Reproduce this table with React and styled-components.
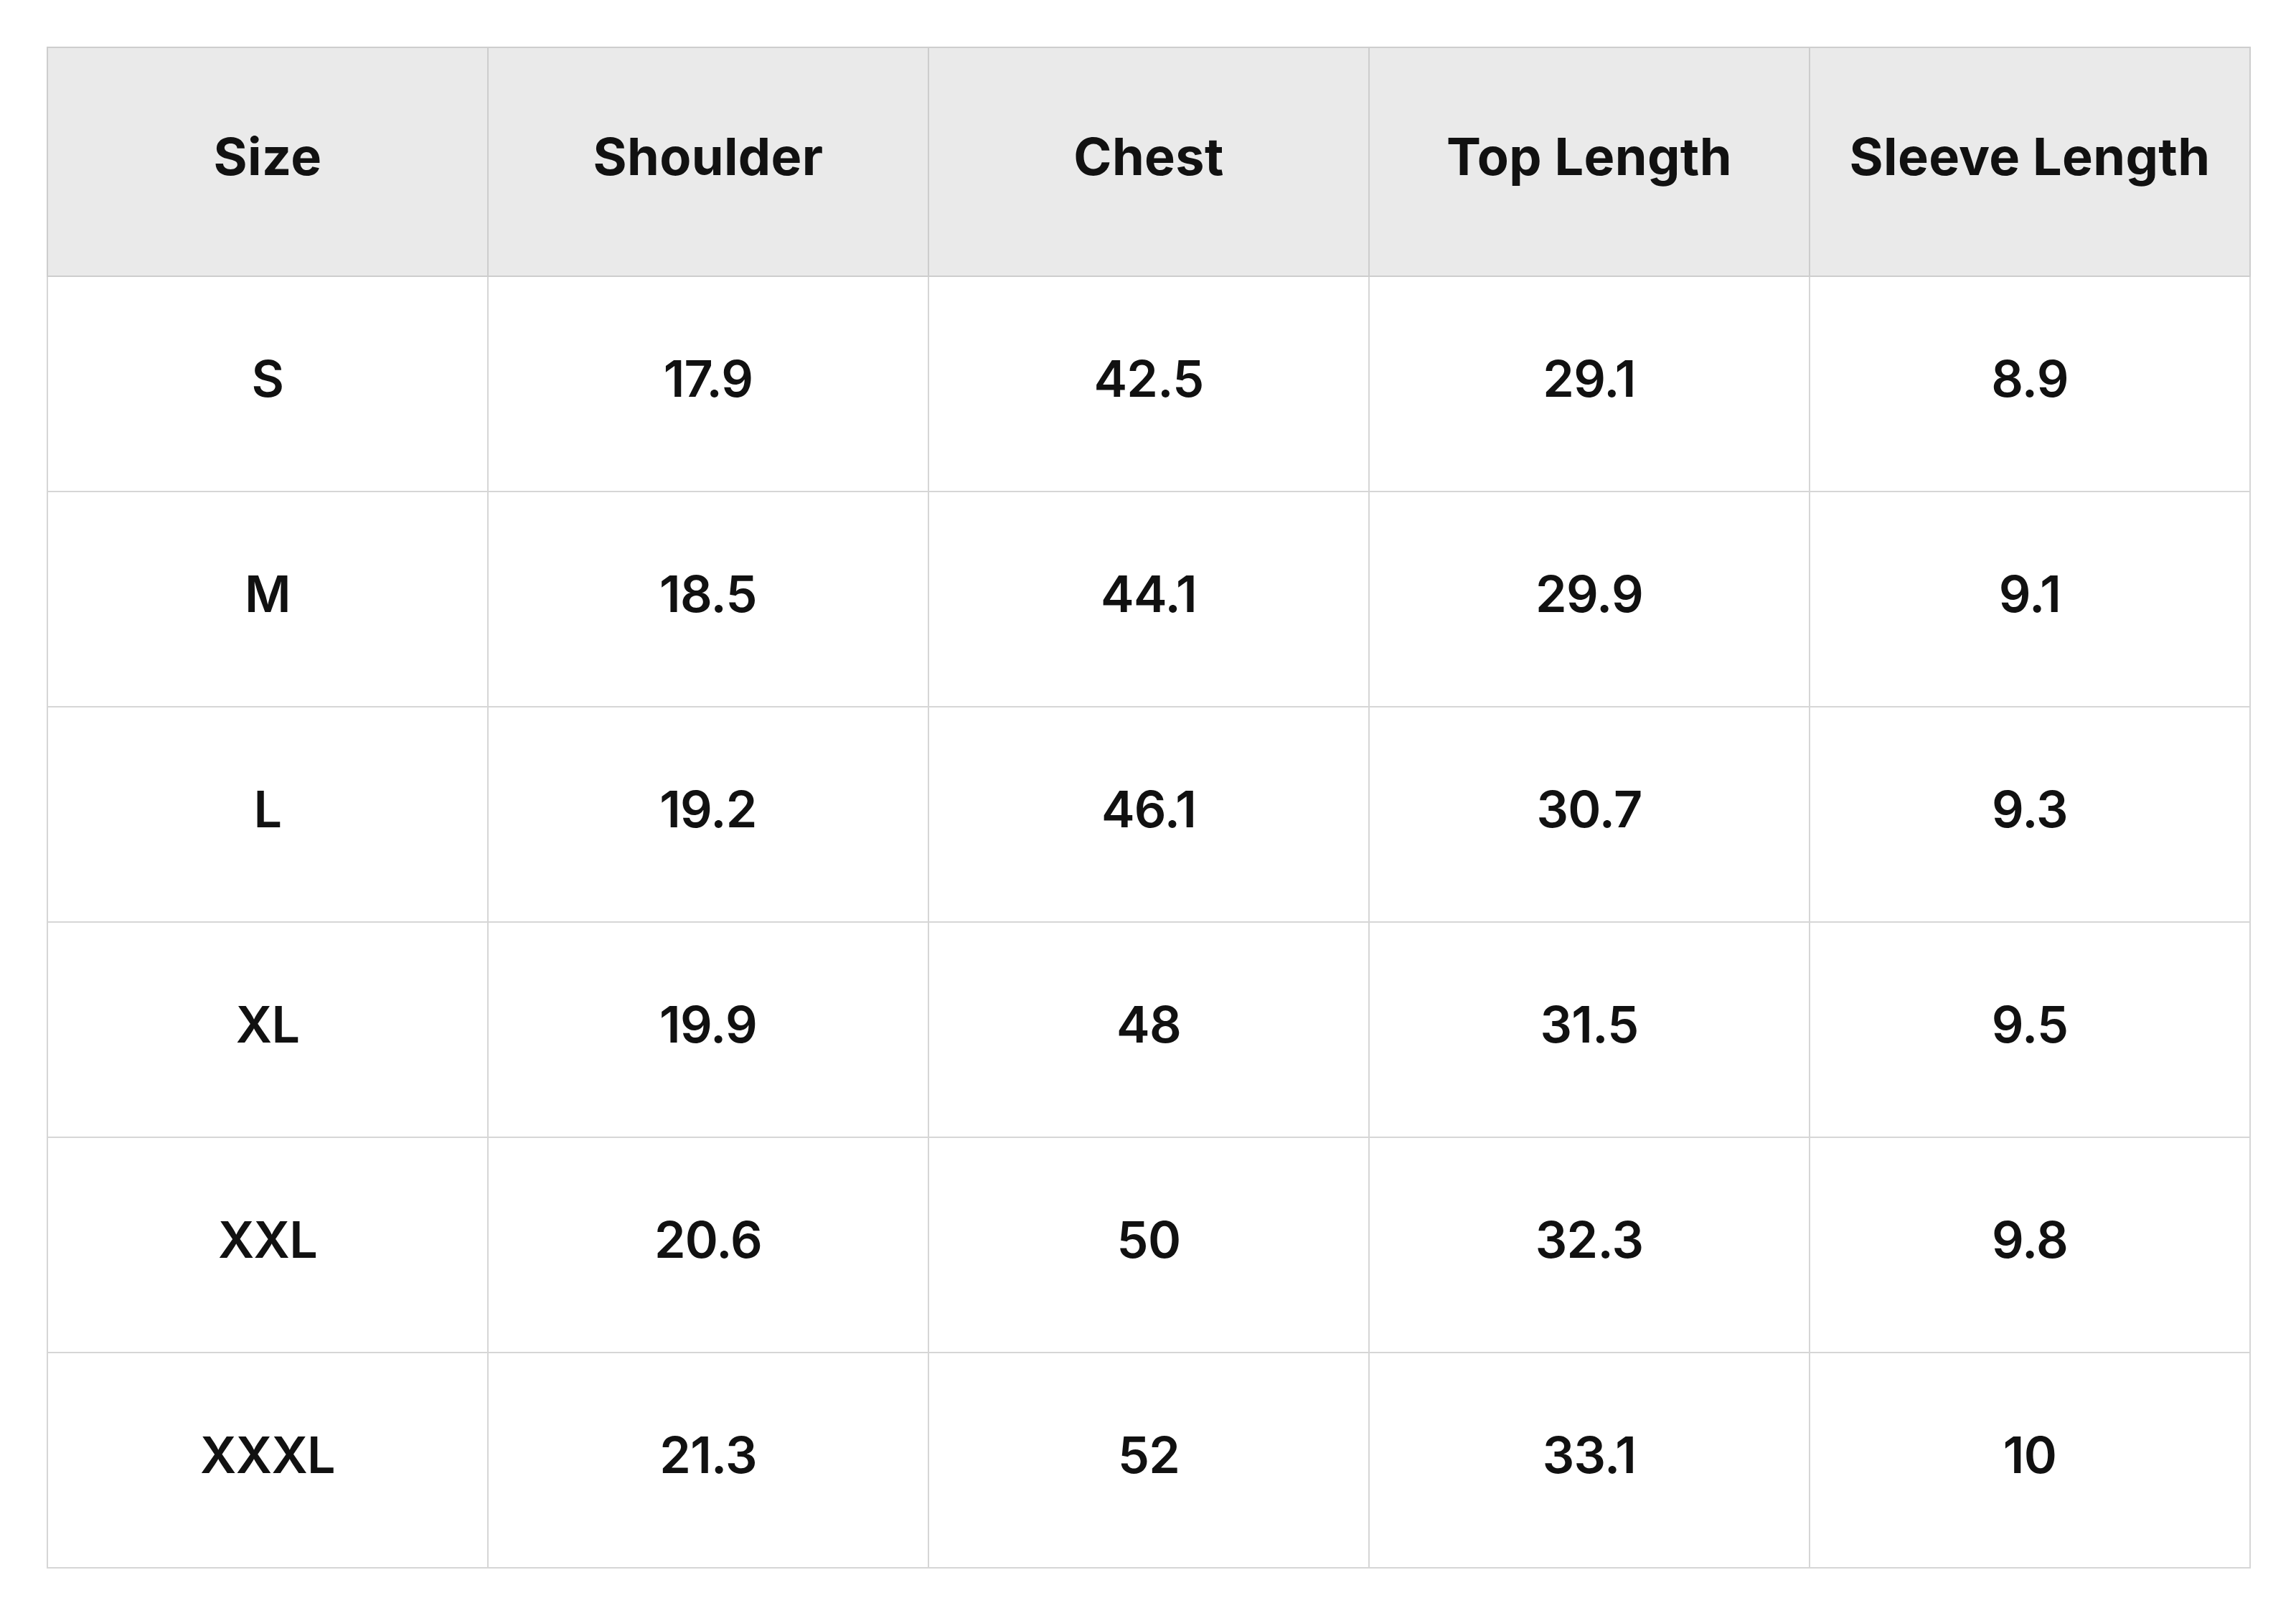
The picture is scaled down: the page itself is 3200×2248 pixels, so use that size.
import React from 'react'
import styled, { createGlobalStyle } from 'styled-components'

const GlobalStyle = createGlobalStyle`
  html, body {
    margin: 0;
    padding: 0;
    background: #ffffff;
  }
  body {
    font-family: 'Inter', 'Noto Sans', sans-serif;
    color: #111111;
  }
`

const Page = styled.div`
  padding: 65px 59px 64px 65px;
`

const Table = styled.table`
  width: 3072px;
  border-collapse: collapse;
  table-layout: fixed;
  border: 2px solid #cdcdcd;
`

const HeadCell = styled.th`
  height: 301px;
  padding: 0 0 16px;
  background: #eaeaea;
  border: 2px solid #cdcdcd;
  font-size: 72px;
  font-weight: 700;
  letter-spacing: 0.005em;
  text-align: center;
  vertical-align: middle;
  color: #111111;
`

const Cell = styled.td`
  height: 282px;
  padding: 0 0 16px;
  background: #ffffff;
  border: 2px solid #d6d6d6;
  font-size: 70px;
  font-weight: 600;
  letter-spacing: -0.01em;
  text-align: center;
  vertical-align: middle;
  color: #111111;
`

const columns = ['Size', 'Shoulder', 'Chest', 'Top Length', 'Sleeve Length']

const rows = [
  ['S', '17.9', '42.5', '29.1', '8.9'],
  ['M', '18.5', '44.1', '29.9', '9.1'],
  ['L', '19.2', '46.1', '30.7', '9.3'],
  ['XL', '19.9', '48', '31.5', '9.5'],
  ['XXL', '20.6', '50', '32.3', '9.8'],
  ['XXXL', '21.3', '52', '33.1', '10'],
]

export default function App() {
  return (
    <>
      <GlobalStyle />
      <Page>
        <Table>
          <thead>
            <tr>
              {columns.map(c => (
                <HeadCell key={c}>{c}</HeadCell>
              ))}
            </tr>
          </thead>
          <tbody>
            {rows.map(r => (
              <tr key={r[0]}>
                {r.map((v, i) => (
                  <Cell key={i}>{v}</Cell>
                ))}
              </tr>
            ))}
          </tbody>
        </Table>
      </Page>
    </>
  )
}
